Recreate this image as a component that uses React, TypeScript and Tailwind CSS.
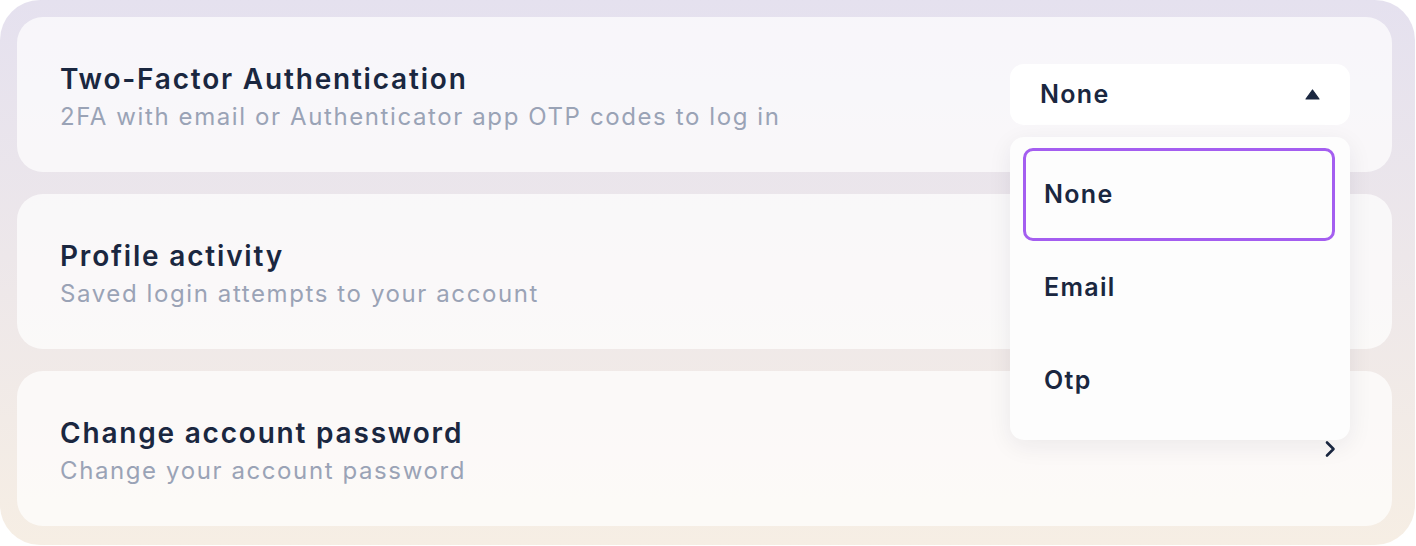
const font = { fontFamily: 'Inter, "Noto Sans", sans-serif' }

const options = ['None', 'Email', 'Otp']

const Caret = () => (
    <svg width="15" height="11" viewBox="0 0 15 11" className="text-[#1a2740]">
        <path d="M7.5 1 L14 10 L1 10 Z" fill="currentColor" stroke="currentColor" strokeWidth="1.2" strokeLinejoin="round" />
    </svg>
)

const Chevron = () => (
    <svg width="12" height="18" viewBox="0 0 12 18" fill="none" className="text-[#1a2740]">
        <path d="M3 2.5 L9.5 9 L3 15.5" stroke="currentColor" strokeWidth="2.6" strokeLinecap="round" strokeLinejoin="round" />
    </svg>
)

const SettingText = ({ title, subtitle }: { title: string; subtitle: string }) => (
    <div className="mt-[6px] flex flex-col">
        <p className="text-[28px] leading-[36px] font-semibold tracking-[1.8px] text-[#1a2740]">{title}</p>
        <p className="mt-[2px] text-[24px] leading-[36px] tracking-[1.6px] text-[#9aa3b6]">{subtitle}</p>
    </div>
)

const TwoFactorSelect = () => {
    const selected = 'None'
    return (
        <div className="relative">
            <button className="w-[340px] h-[61px] rounded-[14px] bg-white flex items-center justify-between pl-[30px] pr-[30px]">
                <span className="text-[25px] font-semibold tracking-[1.3px] text-[#1a2740]">{selected}</span>
                <Caret />
            </button>
            <div className="absolute left-0 top-[73px] z-10 w-[340px] rounded-[14px] bg-[#fdfdfd] pt-[11px] pb-[13px] pl-[13px] pr-[15px] shadow-[0_6px_24px_rgba(30,30,60,0.07)]">
                {options.map((option) => (
                    <div
                        key={option}
                        className={
                            option === selected
                                ? 'h-[93px] flex items-center pl-[18px] rounded-[10px] border-[3px] border-[#a45ef0]'
                                : 'h-[93px] flex items-center pl-[18px] rounded-[10px] border-[3px] border-transparent'
                        }
                    >
                        <span className="text-[25px] font-semibold tracking-[1.3px] text-[#1a2740]">{option}</span>
                    </div>
                ))}
            </div>
        </div>
    )
}

export default function App() {
    return (
        <div style={font} className="w-[1415px] h-[545px] rounded-[40px] bg-linear-to-b from-[#e5e1ef] to-[#f6eee4] pt-[17px] pl-[17px] pr-[23px] pb-[20px] flex flex-col gap-[22px]">
            <div className="h-[155px] shrink-0 rounded-[26px] bg-white/70 flex items-center justify-between pl-[43px] pr-[42px]">
                <SettingText title="Two-Factor Authentication" subtitle="2FA with email or Authenticator app OTP codes to log in" />
                <TwoFactorSelect />
            </div>
            <div className="h-[155px] shrink-0 rounded-[26px] bg-white/70 flex items-center justify-between pl-[43px] pr-[56px]">
                <SettingText title="Profile activity" subtitle="Saved login attempts to your account" />
                <Chevron />
            </div>
            <div className="h-[155px] shrink-0 rounded-[26px] bg-white/70 flex items-center justify-between pl-[43px] pr-[56px]">
                <SettingText title="Change account password" subtitle="Change your account password" />
                <Chevron />
            </div>
        </div>
    )
}
